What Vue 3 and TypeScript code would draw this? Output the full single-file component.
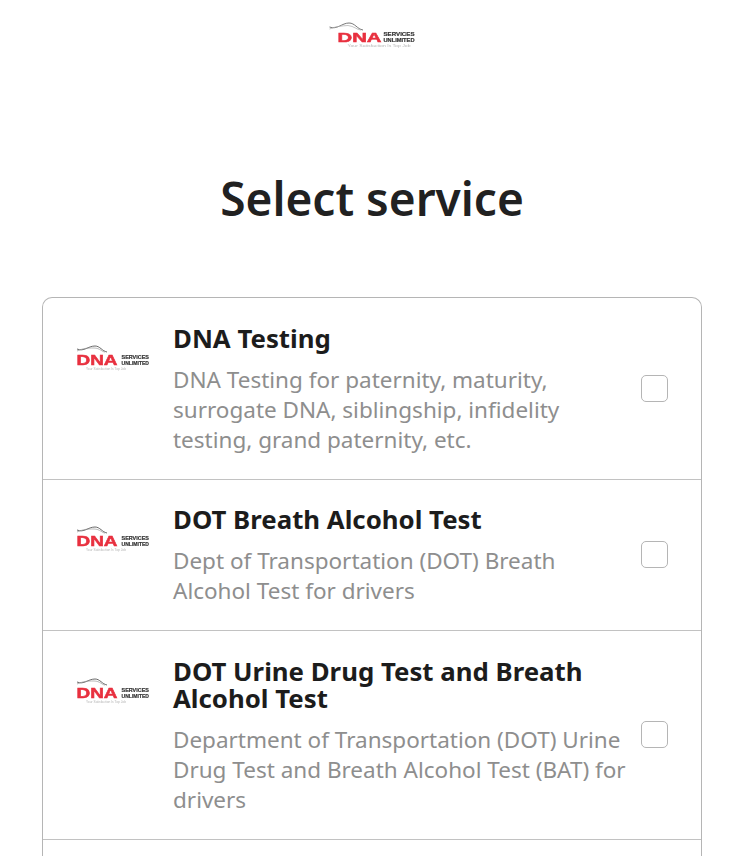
<script setup lang="ts">
interface Service { id: number; title: string; desc: string }
const services: Service[] = [
  { id: 1, title: 'DNA Testing', desc: 'DNA Testing for paternity, maturity, surrogate DNA, siblingship, infidelity testing, grand paternity, etc.' },
  { id: 2, title: 'DOT Breath Alcohol Test', desc: 'Dept of Transportation (DOT) Breath Alcohol Test for drivers' },
  { id: 3, title: 'DOT Urine Drug Test and Breath Alcohol Test', desc: 'Department of Transportation (DOT) Urine Drug Test and Breath Alcohol Test (BAT) for drivers' },
]
</script>

<template>
  <div class="page">
    <header class="top">
      <svg class="logo-top" viewBox="0 0 88 26" aria-label="DNA Services Unlimited">
        <path d="M1.5 5 C9 8 14 1 21 1 C27 1 29 7 35 8" fill="none" stroke="#555" stroke-width=".8" />
        <path d="M1.5 7 C9 4 14 4 20 3.5 C26 4 29 8 33 8" fill="none" stroke="#aaa" stroke-width=".7" />
        <text x="9.5" y="19.5" class="dna" font-size="13.2" textLength="44" lengthAdjust="spacingAndGlyphs">DNA</text>
        <text x="55.5" y="14" class="sub" font-size="5.5" textLength="31" lengthAdjust="spacingAndGlyphs">SERVICES</text>
        <text x="55.5" y="19.5" class="sub" font-size="5.5" textLength="31" lengthAdjust="spacingAndGlyphs">UNLIMITED</text>
        <text x="19.5" y="24.5" class="tag" font-size="3.6" textLength="63" lengthAdjust="spacingAndGlyphs">Your Satisfaction Is Top Job</text>
      </svg>
    </header>
    <h1 class="heading">Select service</h1>
    <section class="card">
      <article v-for="s in services" :key="s.id" class="row">
        <svg class="logo" viewBox="0 0 74 30" aria-hidden="true">
          <path d="M1 7 C8 10 12 4 19 4 C24 4 26 9 31 10" fill="none" stroke="#444" stroke-width=".8" />
          <path d="M1 9 C8 6 12 6 18 6 C24 6 26 10 29 10" fill="none" stroke="#999" stroke-width=".7" />
          <text x="0.5" y="23" class="dna" font-size="14" textLength="41" lengthAdjust="spacingAndGlyphs">DNA</text>
          <text x="45.5" y="17" class="sub" font-size="5.5" textLength="27.5" lengthAdjust="spacingAndGlyphs">SERVICES</text>
          <text x="45.5" y="23" class="sub" font-size="5.5" textLength="27.5" lengthAdjust="spacingAndGlyphs">UNLIMITED</text>
          <text x="10" y="28" class="tag" font-size="3.2" textLength="40" lengthAdjust="spacingAndGlyphs">Your Satisfaction Is Top Job</text>
        </svg>
        <div class="body">
          <h2 class="title">{{ s.title }}</h2>
          <p class="desc">{{ s.desc }}</p>
        </div>
        <span class="check"></span>
      </article>
      <div class="row-more"></div>
    </section>
  </div>
</template>

<style scoped>
.page {
  height: 856px;
  overflow: hidden;
  font-family: "Noto Sans", "Open Sans", sans-serif;
  color: #212121;
  background: #fff;
  padding: 0 43px 0 42px;
  box-sizing: border-box;
}
.top { display: flex; justify-content: center; padding-top: 22px; height: 48px; box-sizing: border-box; }
.logo-top { width: 88px; height: 26px; filter: blur(0.35px); }
.dna { font-family: "Liberation Sans", sans-serif; font-weight: 700; fill: #e8303f; stroke: #e8303f; stroke-width: 0.5px; }
.sub { font-family: "Liberation Sans", sans-serif; font-weight: 700; fill: #333; stroke: #333; stroke-width: 0.2px; }
.tag { font-family: "Liberation Sans", sans-serif; fill: #b5b5b5; }
.heading {
  margin: 116px 0 0;
  font-size: 46px;
  line-height: 68px;
  font-weight: 600;
  text-align: center;
  height: 133px;
}
.card {
  border: 1px solid #b5b5b5;
  border-bottom: 0;
  border-radius: 10px 10px 0 0;
}
.row {
  display: flex;
  align-items: flex-start;
  padding: 27px 33px 0 33px;
  border-bottom: 1px solid #c2c2c2;
  box-sizing: border-box;
}
.row:nth-child(1) { height: 182px; }
.row:nth-child(2) { height: 151px; padding-top: 26px; }
.row:nth-child(3) { height: 209px; padding-top: 27px; }
.row-more { height: 40px; }
.logo { width: 74px; height: 30px; flex: none; margin-top: 17px; filter: blur(0.3px); }
.body { width: 465px; margin-left: 23px; flex: none; }
.title { margin: 0; font-size: 25.8px; line-height: 27px; font-weight: 700; color: #1c1c1c; }
.desc { margin: 13px 0 0; font-size: 22.5px; line-height: 30px; color: #8e8e8e; }
.check {
  width: 27px;
  height: 27px;
  border: 1px solid #b5b5b5;
  border-radius: 5px;
  box-sizing: border-box;
  margin-left: auto;
  margin-top: 50px;
}
.row:nth-child(2) .check { margin-top: 35px; }
.row:nth-child(3) .check { margin-top: 63px; }
</style>
